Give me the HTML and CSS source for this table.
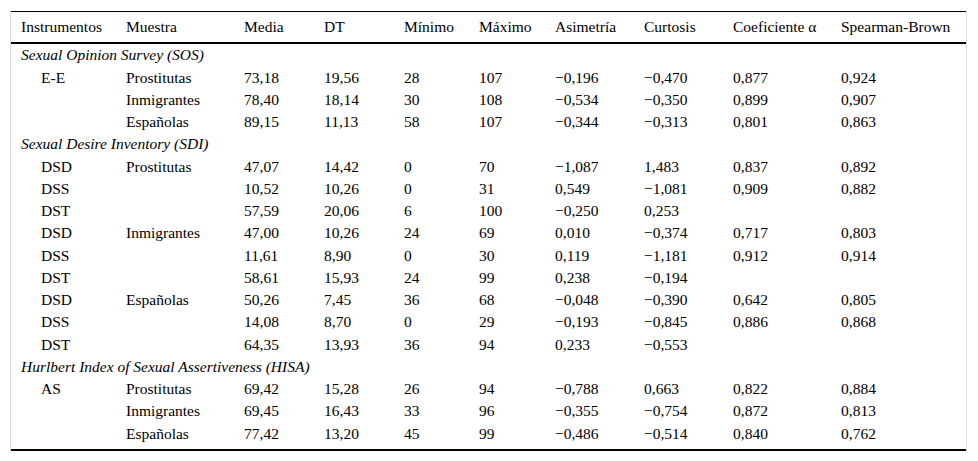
FILE: index.html
```html
<!DOCTYPE html>
<html lang="es">
<head>
<meta charset="utf-8">
<title>Tabla</title>
<link rel="stylesheet" href="styles.css">
</head>
<body>
<div class="frame">
<table class="stats">
<colgroup>
<col class="c1"><col class="c2"><col class="c3"><col class="c4"><col class="c5">
<col class="c6"><col class="c7"><col class="c8"><col class="c9"><col class="c10">
</colgroup>
<thead>
<tr><th>Instrumentos</th><th>Muestra</th><th>Media</th><th>DT</th><th>Mínimo</th><th>Máximo</th><th>Asimetría</th><th>Curtosis</th><th>Coeficiente α</th><th>Spearman-Brown</th></tr>
</thead>
<tbody>
<tr class="group"><td colspan="10">Sexual Opinion Survey (SOS)</td></tr>
<tr><td class="ind">E-E</td><td>Prostitutas</td><td>73,18</td><td>19,56</td><td>28</td><td>107</td><td>−0,196</td><td>−0,470</td><td>0,877</td><td>0,924</td></tr>
<tr><td class="ind"></td><td>Inmigrantes</td><td>78,40</td><td>18,14</td><td>30</td><td>108</td><td>−0,534</td><td>−0,350</td><td>0,899</td><td>0,907</td></tr>
<tr><td class="ind"></td><td>Españolas</td><td>89,15</td><td>11,13</td><td>58</td><td>107</td><td>−0,344</td><td>−0,313</td><td>0,801</td><td>0,863</td></tr>
<tr class="group"><td colspan="10">Sexual Desire Inventory (SDI)</td></tr>
<tr><td class="ind">DSD</td><td>Prostitutas</td><td>47,07</td><td>14,42</td><td>0</td><td>70</td><td>−1,087</td><td>1,483</td><td>0,837</td><td>0,892</td></tr>
<tr><td class="ind">DSS</td><td></td><td>10,52</td><td>10,26</td><td>0</td><td>31</td><td>0,549</td><td>−1,081</td><td>0,909</td><td>0,882</td></tr>
<tr><td class="ind">DST</td><td></td><td>57,59</td><td>20,06</td><td>6</td><td>100</td><td>−0,250</td><td>0,253</td><td></td><td></td></tr>
<tr><td class="ind">DSD</td><td>Inmigrantes</td><td>47,00</td><td>10,26</td><td>24</td><td>69</td><td>0,010</td><td>−0,374</td><td>0,717</td><td>0,803</td></tr>
<tr><td class="ind">DSS</td><td></td><td>11,61</td><td>8,90</td><td>0</td><td>30</td><td>0,119</td><td>−1,181</td><td>0,912</td><td>0,914</td></tr>
<tr><td class="ind">DST</td><td></td><td>58,61</td><td>15,93</td><td>24</td><td>99</td><td>0,238</td><td>−0,194</td><td></td><td></td></tr>
<tr><td class="ind">DSD</td><td>Españolas</td><td>50,26</td><td>7,45</td><td>36</td><td>68</td><td>−0,048</td><td>−0,390</td><td>0,642</td><td>0,805</td></tr>
<tr><td class="ind">DSS</td><td></td><td>14,08</td><td>8,70</td><td>0</td><td>29</td><td>−0,193</td><td>−0,845</td><td>0,886</td><td>0,868</td></tr>
<tr><td class="ind">DST</td><td></td><td>64,35</td><td>13,93</td><td>36</td><td>94</td><td>0,233</td><td>−0,553</td><td></td><td></td></tr>
<tr class="group"><td colspan="10">Hurlbert Index of Sexual Assertiveness (HISA)</td></tr>
<tr><td class="ind">AS</td><td>Prostitutas</td><td>69,42</td><td>15,28</td><td>26</td><td>94</td><td>−0,788</td><td>0,663</td><td>0,822</td><td>0,884</td></tr>
<tr><td class="ind"></td><td>Inmigrantes</td><td>69,45</td><td>16,43</td><td>33</td><td>96</td><td>−0,355</td><td>−0,754</td><td>0,872</td><td>0,813</td></tr>
<tr class="last"><td class="ind"></td><td>Españolas</td><td>77,42</td><td>13,20</td><td>45</td><td>99</td><td>−0,486</td><td>−0,514</td><td>0,840</td><td>0,762</td></tr>
</tbody>
</table>
</div>
</body>
</html>
```
FILE: styles.css
```css
html, body {
  margin: 0;
  padding: 0;
  background: #ffffff;
}
body {
  font-family: "Liberation Serif", "Times New Roman", serif;
  font-size: 15.5px;
  color: #000000;
}
.frame {
  margin: 11px 0 0 10px;
  width: 955px;
  border-left: 1px solid #dcdcdc;
  border-right: 1px solid #dcdcdc;
}
.stats {
  width: 955px;
  table-layout: fixed;
  border-collapse: collapse;
  border-top: 1px solid #000;
  border-bottom: 2px solid #000;
}
.c1 { width: 105px; }
.c2 { width: 118px; }
.c3 { width: 80px; }
.c4 { width: 80px; }
.c5 { width: 75px; }
.c6 { width: 76px; }
.c7 { width: 89px; }
.c8 { width: 89px; }
.c9 { width: 108px; }
.c10 { width: 135px; }
.stats th,
.stats td {
  text-align: left;
  font-weight: normal;
  padding: 3px 0 3px 10px;
  line-height: 16.25px;
  white-space: nowrap;
  vertical-align: middle;
}
.stats thead th {
  padding-top: 7px;
  padding-bottom: 7px;
  border-bottom: 2px solid #000;
}
.stats td.ind {
  padding-left: 30px;
}
.group td {
  font-style: italic;
}
.last td {
  padding-bottom: 7px;
}
```
